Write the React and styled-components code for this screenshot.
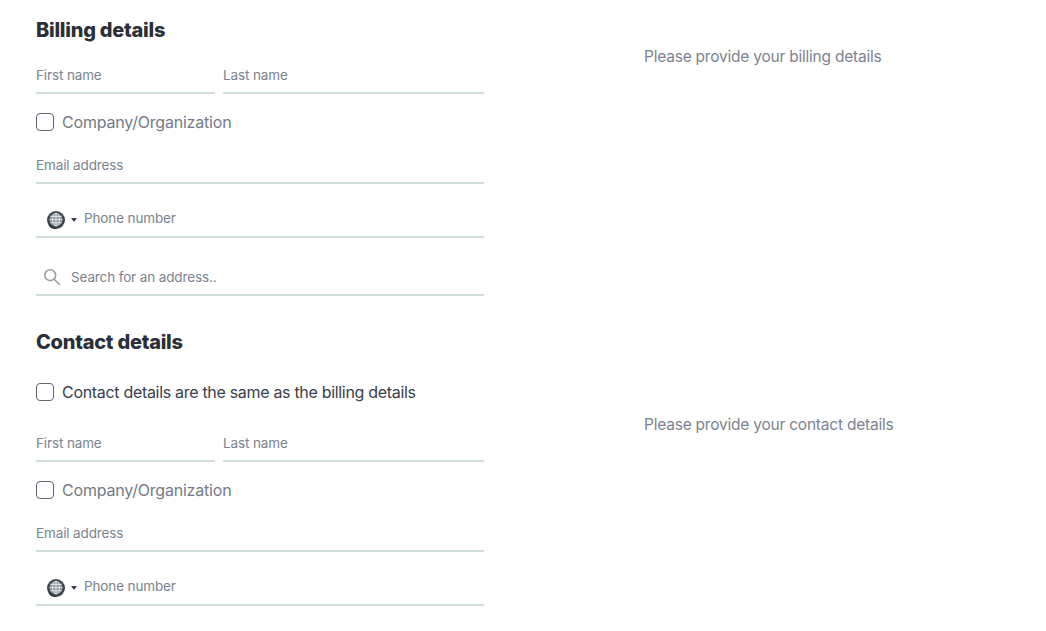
import React from "react";
import styled, { createGlobalStyle } from "styled-components";

const GlobalStyle = createGlobalStyle`
  html, body {
    margin: 0;
    padding: 0;
    background: #fff;
    font-family: Inter, "Noto Sans", sans-serif;
  }
`;

const Page = styled.div`
  padding: 16px 0 0 36px;
`;

const Heading = styled.h2`
  margin: ${(p) => (p.$second ? "32px 0 0" : "0")};
  height: 28px;
  font-size: 20px;
  line-height: 28px;
  font-weight: 800;
  letter-spacing: -0.25px;
  color: #2b2f38;
`;

const Section = styled.section`
  display: grid;
  grid-template-columns: 448px 1fr;
  column-gap: 160px;
`;

const Fields = styled.div`
  display: flex;
  flex-direction: column;
  padding-top: 14px;
`;

const Note = styled.p`
  margin: 0;
  padding-top: 1px;
  font-size: 15.5px;
  line-height: 24px;
  letter-spacing: -0.22px;
  color: #7b8391;
`;

const NameRow = styled.div`
  display: grid;
  grid-template-columns: 179px 261px;
  column-gap: 8px;
`;

const Field = styled.div`
  display: flex;
  align-items: center;
  box-sizing: border-box;
  height: ${(p) => p.$height || 36}px;
  margin-top: ${(p) => p.$top || 0}px;
  padding-top: ${(p) => (p.$phone ? 2 : 0)}px;
  border-bottom: 2px solid #d2dddd;
  font-size: 13.5px;
  letter-spacing: -0.13px;
  color: #7b8391;
`;

const CheckRow = styled.label`
  display: flex;
  align-items: center;
  gap: 8px;
  height: 28px;
  margin: ${(p) => p.$margin || "14px 0 12px"};
  font-size: 16px;
  letter-spacing: ${(p) => (p.$dark ? "-0.31px" : "-0.2px")};
  color: ${(p) => (p.$dark ? "#3a404b" : "#737b89")};
`;

const Box = styled.span`
  box-sizing: border-box;
  width: 18px;
  height: 18px;
  border: 1.5px solid #5c6676;
  border-radius: 4px;
  background: #fff;
`;

const PhonePicker = styled.span`
  display: flex;
  align-items: center;
  gap: 5px;
  margin: 4px 7px 0 10px;
`;

const Caret = styled.span`
  width: 0;
  height: 0;
  border-left: 3px solid transparent;
  border-right: 3px solid transparent;
  border-top: 4px solid #3a404b;
`;

const SearchGlyph = styled.svg`
  margin: 0 10px 0 7px;
  flex: none;
`;

function Globe() {
  return (
    <svg width="20" height="20" viewBox="0 0 20 20" fill="none">
      <circle cx="10" cy="10" r="9" fill="#3f4550" />
      <circle cx="10" cy="9.6" r="6.6" fill="#8b919b" />
      <g stroke="#e9ebee" strokeWidth="0.9">
        <ellipse cx="10" cy="9.6" rx="3.4" ry="6.4" />
        <path d="M10 3.2v12.8M3.6 9.6h12.8M4.4 6.4h11.2M4.4 12.8h11.2" />
      </g>
      <path d="M3 14.5c1.4 2.3 3.6 3.6 6.4 3.8" stroke="#2b2f38" strokeWidth="1.6" />
    </svg>
  );
}

function Phone() {
  return (
    <Field $height={40} $top={14} $phone>
      <PhonePicker>
        <Globe />
        <Caret />
      </PhonePicker>
      Phone number
    </Field>
  );
}

function ContactFields() {
  return (
    <>
      <NameRow>
        <Field>First name</Field>
        <Field>Last name</Field>
      </NameRow>
      <CheckRow>
        <Box />
        Company/Organization
      </CheckRow>
      <Field>Email address</Field>
      <Phone />
    </>
  );
}

export default function App() {
  return (
    <Page>
      <GlobalStyle />
      <Heading>Billing details</Heading>
      <Section>
        <Fields>
          <ContactFields />
          <Field $top={22}>
            <SearchGlyph width="18" height="18" viewBox="0 0 18 18" fill="none" stroke="#979ea9" strokeWidth="1.6" strokeLinecap="round">
              <circle cx="7.2" cy="7.2" r="5.4" />
              <path d="M11.2 11.2l5.3 5.3" />
            </SearchGlyph>
            Search for an address..
          </Field>
        </Fields>
        <Note>Please provide your billing details</Note>
      </Section>
      <Heading $second>Contact details</Heading>
      <CheckRow $dark $margin="22px 0 6px">
        <Box />
        Contact details are the same as the billing details
      </CheckRow>
      <Section>
        <Fields>
          <ContactFields />
        </Fields>
        <Note>Please provide your contact details</Note>
      </Section>
    </Page>
  );
}
